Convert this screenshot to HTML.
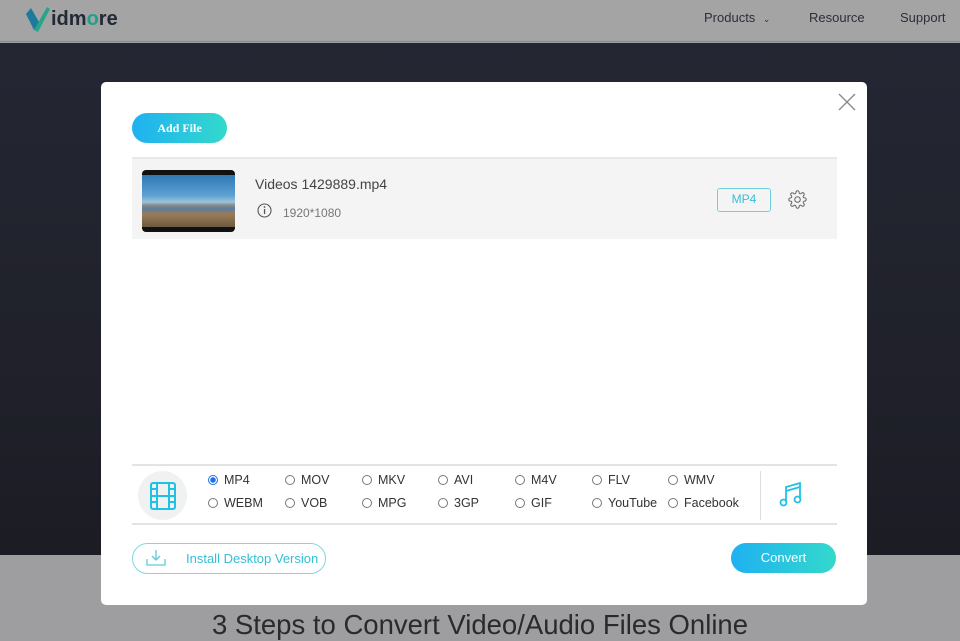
<!DOCTYPE html>
<html><head><meta charset="utf-8"><style>
*{margin:0;padding:0;box-sizing:border-box}
body{width:960px;height:640px;overflow:hidden;font-family:"Liberation Sans",Arial,sans-serif;background:#9e9ea0;position:relative}
.hdr{position:absolute;left:0;top:0;width:960px;height:42px;background:#a4a4a4;border-bottom:1px solid #8a8a8a}
.nav{position:absolute;top:10px;font-size:13px;color:#2c2f3a}
.dark{position:absolute;left:0;top:43px;width:960px;height:512px;background:linear-gradient(#242733,#1f2029 70%,#1b1c24)}
.steps{position:absolute;left:0;width:960px;top:609px;text-align:center;font-size:27.5px;color:#2a2a2e}
.modal{position:absolute;left:101px;top:82px;width:766px;height:523px;background:#fff;border-radius:5px}
.add{position:absolute;left:31px;top:31px;width:95px;height:30px;border-radius:15px;background:linear-gradient(90deg,#1fb1f1,#33d9cc);color:#fff;font-family:"Liberation Serif",serif;font-weight:bold;font-size:12px;text-align:center;line-height:30px}
.row{position:absolute;left:31px;top:75px;width:705px;height:82px;background:#f4f4f4;border-top:2px solid #e8e8e8}
.thumb{position:absolute;left:10px;top:11px;width:93px;height:62px;border-radius:4px;background:#111;overflow:hidden}
.thumb div{position:absolute;left:0;top:5px;width:93px;height:52px;background:linear-gradient(#2e78b5 0%,#5ea2d4 40%,#9cc3dc 52%,#8a8d84 58%,#5c7ea1 64%,#9a7b58 75%,#6d5a40 100%)}
.fmt{position:absolute;left:31px;top:382px;width:705px;height:61px;border-top:2px solid #e3e3e3;border-bottom:2px solid #e3e3e3}
.opt{position:absolute;font-size:12.5px;color:#333;white-space:nowrap}
.opt i{display:inline-block;width:10px;height:10px;border:1px solid #777;border-radius:50%;margin-right:6px;vertical-align:-1px}
.opt i.on{border-color:#1a73e8;background:radial-gradient(#1a73e8 2.5px,#fff 3px)}
</style></head><body>
<div class="hdr">
 <svg style="position:absolute;left:25px;top:4px" width="28" height="30" viewBox="0 0 28 30"><path d="M1 10 L9 26 L14 18 L6 4 Z" fill="#1c7a9e"/><path d="M9 26 L22 3 L25 5 L13 28 Z" fill="#27a58a"/></svg>
 <div style="position:absolute;left:51px;top:8px;font-size:20px;font-weight:bold;color:#222a35">idm<span style="color:#22a08a">o</span>re</div>
 <div class="nav" style="left:704px">Products <span style="font-size:9px;margin-left:4px">&#8964;</span></div>
 <div class="nav" style="left:809px">Resource</div>
 <div class="nav" style="left:900px">Support</div>
</div>
<div class="dark"></div>
<div class="steps">3 Steps to Convert Video/Audio Files Online</div>
<div class="modal">
 <svg style="position:absolute;left:737px;top:11px" width="18" height="18"><path d="M1 1L17 17M17 1L1 17" stroke="#888" stroke-width="1.3"/></svg>
 <div class="add">Add File</div>
 <div class="row">
  <div class="thumb"><div></div></div>
  <div style="position:absolute;left:123px;top:17px;font-size:14px;color:#444">Videos 1429889.mp4</div>
  <svg style="position:absolute;left:125px;top:44px" width="15" height="15"><circle cx="7.5" cy="7.5" r="6.5" fill="none" stroke="#555" stroke-width="1.1"/><rect x="6.9" y="6" width="1.3" height="5" fill="#555"/><circle cx="7.5" cy="4" r="0.9" fill="#555"/></svg>
  <div style="position:absolute;left:151px;top:47px;font-size:12px;color:#777">1920*1080</div>
  <div style="position:absolute;left:585px;top:29px;width:54px;height:24px;border:1.5px solid #6fd0de;border-radius:3px;color:#36bfd6;font-size:12px;text-align:center;line-height:21px">MP4</div>
  <svg style="position:absolute;left:656px;top:31px" width="19" height="19" viewBox="0 0 24 24"><path d="M12 15.5a3.5 3.5 0 1 0 0-7 3.5 3.5 0 0 0 0 7z M19.4 15a1.7 1.7 0 0 0 .3 1.8l.1.1a2 2 0 1 1-2.8 2.8l-.1-.1a1.7 1.7 0 0 0-1.8-.3 1.7 1.7 0 0 0-1 1.5V21a2 2 0 1 1-4 0v-.1a1.7 1.7 0 0 0-1.1-1.5 1.7 1.7 0 0 0-1.8.3l-.1.1a2 2 0 1 1-2.8-2.8l.1-.1a1.7 1.7 0 0 0 .3-1.8 1.7 1.7 0 0 0-1.5-1H3a2 2 0 1 1 0-4h.1a1.7 1.7 0 0 0 1.5-1.1 1.7 1.7 0 0 0-.3-1.8l-.1-.1a2 2 0 1 1 2.8-2.8l.1.1a1.7 1.7 0 0 0 1.8.3H9a1.7 1.7 0 0 0 1-1.5V3a2 2 0 1 1 4 0v.1a1.7 1.7 0 0 0 1 1.5 1.7 1.7 0 0 0 1.8-.3l.1-.1a2 2 0 1 1 2.8 2.8l-.1.1a1.7 1.7 0 0 0-.3 1.8V9a1.7 1.7 0 0 0 1.5 1H21a2 2 0 1 1 0 4h-.1a1.7 1.7 0 0 0-1.5 1z" fill="none" stroke="#666" stroke-width="1.3"/></svg>
 </div>
 <div class="fmt">
  <div style="position:absolute;left:6px;top:5px;width:49px;height:49px;border-radius:50%;background:#f0f1f1"></div>
  <svg style="position:absolute;left:18px;top:16px" width="26" height="28" viewBox="0 0 26 28"><rect x="1" y="1" width="24" height="26" rx="2" fill="none" stroke="#1fc2e6" stroke-width="2"/><path d="M7 1V27M19 1V27M7 14H19M1 7H7M1 14H7M1 20H7M19 7H25M19 14H25M19 20H25" stroke="#1fc2e6" stroke-width="2"/></svg>
  <div class="opt" style="left:76px;top:7px"><i class="on"></i>MP4</div>
  <div class="opt" style="left:76px;top:30px"><i></i>WEBM</div>
  <div class="opt" style="left:153px;top:7px"><i></i>MOV</div>
  <div class="opt" style="left:153px;top:30px"><i></i>VOB</div>
  <div class="opt" style="left:230px;top:7px"><i></i>MKV</div>
  <div class="opt" style="left:230px;top:30px"><i></i>MPG</div>
  <div class="opt" style="left:306px;top:7px"><i></i>AVI</div>
  <div class="opt" style="left:306px;top:30px"><i></i>3GP</div>
  <div class="opt" style="left:383px;top:7px"><i></i>M4V</div>
  <div class="opt" style="left:383px;top:30px"><i></i>GIF</div>
  <div class="opt" style="left:460px;top:7px"><i></i>FLV</div>
  <div class="opt" style="left:460px;top:30px"><i></i>YouTube</div>
  <div class="opt" style="left:536px;top:7px"><i></i>WMV</div>
  <div class="opt" style="left:536px;top:30px"><i></i>Facebook</div>
  <div style="position:absolute;left:628px;top:5px;width:1px;height:49px;background:#ddd"></div>
  <svg style="position:absolute;left:647px;top:16px" width="24" height="26" viewBox="0 0 24 26"><path d="M7 20V5L21 1V17" fill="none" stroke="#1fc2e6" stroke-width="1.8"/><path d="M7 9L21 5" stroke="#1fc2e6" stroke-width="1.8"/><circle cx="4.5" cy="20.5" r="3" fill="none" stroke="#1fc2e6" stroke-width="1.8"/><circle cx="18.5" cy="17.5" r="3" fill="none" stroke="#1fc2e6" stroke-width="1.8"/></svg>
 </div>
 <div style="position:absolute;left:31px;top:461px;width:194px;height:31px;border:1.5px solid #7fd6e2;border-radius:16px">
  <svg style="position:absolute;left:13px;top:5px" width="20" height="18" viewBox="0 0 20 18"><path d="M10 1V11M6 7L10 11L14 7M1 10V16H19V10" fill="none" stroke="#5fcadb" stroke-width="1.3"/></svg>
  <div style="position:absolute;left:53px;top:7px;font-size:13px;color:#33bfd6">Install Desktop Version</div>
 </div>
 <div style="position:absolute;left:630px;top:461px;width:105px;height:30px;border-radius:15px;background:linear-gradient(90deg,#1fb1f1,#33d9cc);color:#fff;font-size:13px;text-align:center;line-height:30px">Convert</div>
</div>
</body></html>
